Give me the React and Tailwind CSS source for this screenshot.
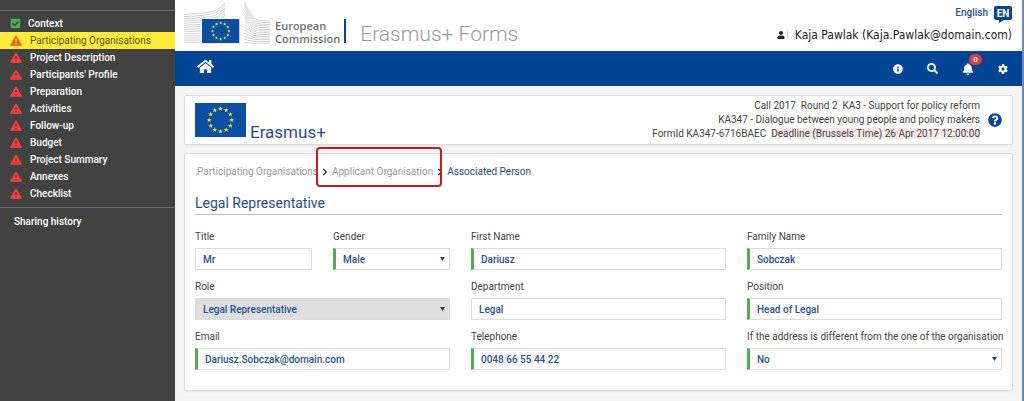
import { FaBell, FaCheckSquare, FaChevronRight, FaCog, FaHome, FaInfoCircle, FaQuestionCircle, FaSearch, FaUser } from 'react-icons/fa'

const menuItems = [
  'Participating Organisations',
  'Project Description',
  "Participants' Profile",
  'Preparation',
  'Activities',
  'Follow-up',
  'Budget',
  'Project Summary',
  'Annexes',
  'Checklist',
]

const fields = [
  { id: 'title', label: 'Title', value: 'Mr', span: 'col-span-1' },
  { id: 'gender', label: 'Gender', value: 'Male', span: 'col-span-1', select: true, required: true },
  { id: 'firstName', label: 'First Name', value: 'Dariusz', span: 'col-span-2', required: true },
  { id: 'familyName', label: 'Family Name', value: 'Sobczak', span: 'col-span-2', required: true },
  { id: 'role', label: 'Role', value: 'Legal Representative', span: 'col-span-2', select: true, disabled: true },
  { id: 'department', label: 'Department', value: 'Legal', span: 'col-span-2' },
  { id: 'position', label: 'Position', value: 'Head of Legal', span: 'col-span-2', required: true },
  { id: 'email', label: 'Email', value: 'Dariusz.Sobczak@domain.com', span: 'col-span-2', required: true },
  { id: 'telephone', label: 'Telephone', value: '0048 66 55 44 22', span: 'col-span-2', required: true },
  {
    id: 'otherAddress',
    label: 'If the address is different from the one of the organisation',
    value: 'No',
    span: 'col-span-2',
    select: true,
    required: true,
  },
]

const star = '0,-2.6 0.7,-0.9 2.5,-0.8 1.1,0.4 1.6,2.1 0,1.2 -1.6,2.1 -1.1,0.4 -2.5,-0.8 -0.7,-0.9'

function FlagShape() {
  return (
    <>
      <rect width="54" height="36" fill="#0b4ea2" />
      {Array.from({ length: 12 }, (_, i) => {
        const angle = (i * Math.PI) / 6
        const x = 27 + 12 * Math.sin(angle)
        const y = 18 - 12 * Math.cos(angle)
        return <polygon key={i} points={star} fill="#d5e04a" transform={`translate(${x} ${y})`} />
      })}
    </>
  )
}

function CommissionLogo() {
  const lines = Array.from({ length: 14 }, (_, i) => i)
  return (
    <svg className="h-11 w-[87px] shrink-0" viewBox="0 0 87 44" aria-hidden="true">
      <g fill="none" stroke="#c6c6c6" strokeWidth="0.8">
        {lines.map((i) => (
          <path key={i} d={`M0 ${14.5 + i * 2.15} L20 ${13 + i * 2.25} C30 ${12 + i * 2.3} 36 ${9 + i * 2.5} 41 ${3 + i * 2.4}`} />
        ))}
        {lines.map((i) => (
          <path key={i} d={`M60.5 ${2 + i * 3.1} C65 ${12 + i * 2.4} 70 ${20 + i * 1.8} 76 ${20.5 + i * 1.74} L86 ${21 + i * 1.7}`} />
        ))}
      </g>
      <rect x="17" y="18" width="39" height="26" fill="#fff" />
      <g transform="translate(18 19) scale(0.69 0.67)">
        <FlagShape />
      </g>
    </svg>
  )
}

function WarningIcon({ active }) {
  return (
    <svg className="h-[11px] w-3 shrink-0" viewBox="0 0 24 22" aria-hidden="true">
      <path d="M12 1.5 L23 20.5 H1 Z" fill={active ? '#f2641f' : '#f0433a'} stroke={active ? '#f2641f' : '#f0433a'} strokeWidth="2" strokeLinejoin="round" />
      <path d="M12 8v6M12 16v2.6" stroke={active ? '#fdf0a0' : '#8d1d1d'} strokeWidth="2.4" />
    </svg>
  )
}

function Sidebar() {
  return (
    <aside className="w-[175px] shrink-0 bg-[#424242] pt-[10px] text-white">
      <nav className="border-y border-[#6b6b6b] pt-1 pb-[5px] font-medium">
        <a href="#context" className="flex h-[17px] items-center gap-[7px] pl-[10px]">
          <FaCheckSquare className="size-[11px] text-[#4caf50]" />
          Context
        </a>
        {menuItems.map((item, i) => (
          <a
            key={item}
            href="#section"
            className={
              i === 0
                ? 'flex h-[17px] items-center gap-2 bg-[#ffeb3b] pl-[10px] font-normal text-[#5c5420]'
                : 'flex h-[17px] items-center gap-2 pl-[10px]'
            }
          >
            <WarningIcon active={i === 0} />
            {item}
          </a>
        ))}
      </nav>
      <a href="#sharing" className="mt-[6px] block px-[14px] leading-4 font-medium">
        Sharing history
      </a>
    </aside>
  )
}

function Header() {
  return (
    <header className="flex h-[51px] items-start justify-between bg-white pr-[10px] pl-[9px]">
      <div className="flex items-start">
        <CommissionLogo />
        <div className="mt-[19px] ml-1 font-['Open_Sans'] text-[11px] leading-[13px] font-semibold text-[#6f6f6f]">
          European
          <br />
          Commission
        </div>
        <div className="mt-[19px] ml-1 h-6 w-[2px] bg-[#004494]" />
        <h1 className="mt-[21px] ml-[14px] text-[21px] leading-[26px] font-light text-[#999]">Erasmus+ Forms</h1>
      </div>
      <div className="flex flex-col items-end pt-[5px]">
        <a href="#language" className="flex items-start gap-[6px] leading-4 font-medium text-[#2a5298]">
          English
          <svg className="h-[18px] w-[18px]" viewBox="0 0 18 18">
            <path d="M2 1H16Q18 1 18 3V13Q18 15 16 15H10L5 18V15H2Q0 15 0 13V3Q0 1 2 1Z" fill="#004494" />
            <text x="9" y="12" textAnchor="middle" fontSize="10" fontWeight="700" fill="#fff">EN</text>
          </svg>
        </a>
        <div className="mt-1 flex items-center text-[#222]">
          <FaUser className="size-2" />
          <span className="ml-[2px] h-2 w-px bg-[#ccc]" />
          <span className="ml-[7px] font-['DejaVu_Sans_Condensed','Noto_Sans',sans-serif] text-xs leading-4">
            Kaja Pawlak (Kaja.Pawlak@domain.com)
          </span>
        </div>
      </div>
    </header>
  )
}

function NavBar() {
  return (
    <div className="flex h-[35px] items-center justify-between bg-[#004494] pr-[14px] pl-[22px] text-white">
      <button aria-label="Home" className="-mt-[5px]">
        <FaHome className="size-[17px]" />
      </button>
      <div className="flex items-center gap-6">
        <button aria-label="Information">
          <FaInfoCircle className="size-[10px]" />
        </button>
        <button aria-label="Search">
          <FaSearch className="size-[11px]" />
        </button>
        <button aria-label="Notifications" className="relative">
          <FaBell className="size-3" />
          <span className="absolute -top-[9px] left-[7px] h-[11px] w-[13px] rounded-full bg-[#e53945] text-[8px] leading-[11px] font-bold">0</span>
        </button>
        <button aria-label="Settings">
          <FaCog className="size-[10px]" />
        </button>
      </div>
    </div>
  )
}

function FormInfo() {
  return (
    <section className="flex items-center justify-between rounded-xs border border-[#dcdcdc] bg-white px-[10px] shadow-xs">
      <div className="flex items-end gap-1 py-[7px]">
        <svg className="h-[34px] w-[51px]" viewBox="0 0 54 36" aria-hidden="true">
          <FlagShape />
        </svg>
        <h2 className="-mb-[7px] text-[17px] leading-6 text-[#2a4b8d]">Erasmus+</h2>
      </div>
      <div className="flex items-center gap-2">
        <div className="text-right leading-[14px] text-[#444]">
          <p>Call 2017&nbsp; Round 2&nbsp; KA3 - Support for policy reform</p>
          <p>KA347 - Dialogue between young people and policy makers</p>
          <p>
            FormId KA347-6716BAEC&nbsp; <span className="bg-[#fbe9ea]">Deadline (Brussels Time) 26 Apr 2017 12:00:00</span>
          </p>
        </div>
        <button aria-label="Help">
          <FaQuestionCircle className="size-[14px] text-[#004494]" />
        </button>
      </div>
    </section>
  )
}

function Field({ field }) {
  const { id, label, value, span, select, required, disabled } = field
  const box = `block h-[22px] w-full appearance-none border border-[#dcdcdc] pl-[7px] font-medium text-[#2a5298] ${
    required ? 'border-l-3 border-l-[#4caf50]' : ''
  } ${disabled ? 'bg-[#dedede]' : 'bg-white'}`

  return (
    <div className={span}>
      <label htmlFor={id} className="mb-[3px] block leading-4 whitespace-nowrap text-[#444]">
        {label}
      </label>
      {select ? (
        <div className="relative">
          <select id={id} disabled={disabled} className={`${box} opacity-100`}>
            <option>{value}</option>
          </select>
          <svg className="pointer-events-none absolute top-[9px] right-[5px] h-1 w-[5px]" viewBox="0 0 5 4">
            <path d="M0 0H5L2.5 4Z" fill="#1f3f7a" />
          </svg>
        </div>
      ) : (
        <input id={id} type="text" defaultValue={value} className={box} />
      )}
    </div>
  )
}

function Breadcrumb() {
  return (
    <nav className="flex items-center gap-[3px] pl-[2px] leading-4 text-[#999]">
      <a href="#participating">Participating Organisations</a>
      <FaChevronRight className="size-2 text-[#222]" />
      <a href="#applicant" className="relative">
        Applicant Organisation
        <span className="absolute -top-[17px] -right-[9px] -left-4 h-10 rounded-sm border-2 border-[#c01f1f]" />
      </a>
      <FaChevronRight className="size-2 text-[#222]" />
      <a href="#associated" className="text-[#2a4b8d]">Associated Person</a>
    </nav>
  )
}

export default function App() {
  return (
    <div className="flex min-h-screen bg-[#f4f4f4] font-['Roboto',sans-serif] text-[10px]">
      <Sidebar />
      <div className="flex min-w-0 flex-1 flex-col border-r-2 border-[#7388b5]">
        <Header />
        <NavBar />
        <main className="flex flex-col gap-2 px-[9px] pt-[9px] pb-[10px]">
          <FormInfo />
          <section className="rounded-xs border border-[#dcdcdc] bg-white px-[10px] pt-[10px] pb-5 shadow-xs">
            <Breadcrumb />
            <h2 className="mt-[13px] border-b border-[#bdbdbd] pb-[1px] text-sm leading-[20px] text-[#2a4b8d]">Legal Representative</h2>
            <form className="mt-[14px] grid grid-cols-6 gap-x-[21px] gap-y-[9px]">
              {fields.map((field) => (
                <Field key={field.id} field={field} />
              ))}
            </form>
          </section>
        </main>
      </div>
    </div>
  )
}
